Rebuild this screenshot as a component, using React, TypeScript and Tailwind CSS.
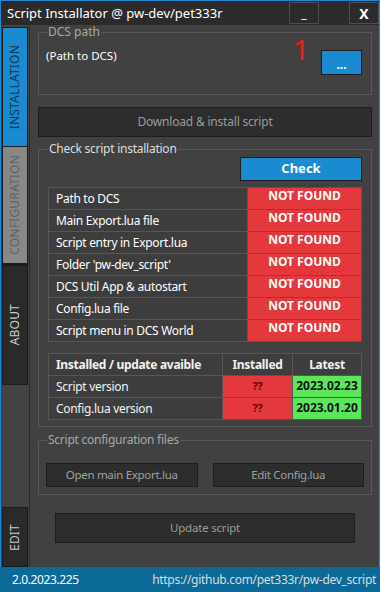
import React from "react";

const font = "font-['Noto_Sans',sans-serif]";

function Tab({ label, cls, h }: { label: string; cls: string; h: string }) {
  return (
    <div className={`w-[26px] ${h} border border-[#1c1c1c] flex items-center justify-center ${cls}`}>
      <span className="[writing-mode:vertical-rl] rotate-180 text-[12px] leading-[14px] tracking-[0.2px]">{label}</span>
    </div>
  );
}

const checks = [
  "Path to DCS",
  "Main Export.lua file",
  "Script entry in Export.lua",
  "Folder 'pw-dev_script'",
  "DCS Util App & autostart",
  "Config.lua file",
  "Script menu in DCS World",
];

export default function App() {
  return (
    <div className={`w-[380px] h-[592px] flex flex-col bg-[#414141] text-[#f2f2f2] ${font}`}>
      {/* title bar */}
      <div className="h-[25px] flex border-t border-x border-[#1b8ad3] bg-[#2b2b2b]">
        <div className="pl-[6px] pt-[3px] text-[13px] leading-[18px] text-white">Script Installator @ pw-dev/pet333r</div>
        <div className="ml-auto flex gap-[30px] pt-[1px]">
          <div className="w-[30px] h-[22px] border border-[#4d4d4d] flex items-end justify-center pb-[3px] text-[12px] leading-[12px] text-white">_</div>
          <div className="w-[30px] h-[22px] border border-[#4d4d4d] flex items-center justify-center text-[14px] font-bold text-white">X</div>
        </div>
      </div>

      {/* main */}
      <div className="flex-1 flex border-x border-[#1b8ad3] min-h-0">
        <div className="w-[29px] bg-[#434343] border-r border-[#2a2a2a] flex flex-col pl-[1px] pt-[2px]">
          <Tab label="INSTALLATION" h="h-[120px]" cls="bg-[#1b8bd1] text-[#173650]" />
          <Tab label="CONFIGURATION" h="h-[120px] -mt-px" cls="bg-[#888888] text-[#626262] border-b-[3px]" />
          <Tab label="ABOUT" h="h-[120px] -mt-px" cls="bg-[#2a2a2a] text-[#c8c8c8]" />
          <Tab label="EDIT" h="h-[60px] mt-auto" cls="bg-[#2a2a2a] text-[#c8c8c8]" />
        </div>

        <div className="flex-1 flex flex-col pl-[8px] pr-[7px]">
          {/* DCS path */}
          <fieldset className="h-[70px] border border-[#585858] pl-[7px] pr-[9px]">
            <legend className="ml-[1px] px-[1px] text-[12px] leading-[14px] text-[#a8a8a8]">DCS path</legend>
            <div className="flex items-start">
              <div className="mt-[10px] text-[11.5px] leading-[14px] text-white flex-1">(Path to DCS)</div>
              <div className="-mt-[4px] mr-[12px] text-[28px] leading-[28px] text-[#ee1c1c]">1</div>
              <div className="mt-[11px] w-[41px] h-[25px] bg-[#1b8bd1] border border-[#1e1e1e] flex items-center justify-center pt-[4px] text-[12px] font-bold leading-[12px] text-white">...</div>
            </div>
          </fieldset>

          <div className="mt-[12px] h-[30px] bg-[#2d2d2d] border border-[#1e1e1e] flex items-center justify-center text-[12px] tracking-[-0.2px] text-[#9c9c9c]">
            Download &amp; install script
          </div>

          {/* check installation */}
          <fieldset className="mt-[5px] border border-[#585858] px-[9px] pb-[6px]">
            <legend className="px-[1px] text-[12px] tracking-[-0.25px] leading-[14px] text-[#dcdcdc]">Check script installation</legend>
            <div className="flex justify-end mt-[1px]">
              <div className="w-[122px] h-[24px] bg-[#1b8bd1] border border-[#1e1e1e] flex items-center justify-center text-[13px] font-bold text-white">Check</div>
            </div>
            <div className="mt-[6px] grid grid-cols-[199px_1fr] border-t border-l border-[#565656]">
              {checks.map((c) => (
                <React.Fragment key={c}>
                  <div className="h-[22px] border-r border-b border-[#565656] bg-[#3d3d3d] pl-[7px] text-[12px] tracking-[-0.3px] leading-[21px] text-white">{c}</div>
                  <div className="h-[22px] border-r border-b border-[#565656] bg-[#e3393d] text-center text-[12px] font-bold leading-[16px] text-white">NOT FOUND</div>
                </React.Fragment>
              ))}
            </div>
            <div className="mt-[11px] grid grid-cols-[174px_70px_1fr] border-t border-l border-[#565656] text-[12px] tracking-[-0.3px]">
              <div className="h-[22px] border-r border-b border-[#565656] bg-[#3d3d3d] pl-[7px] leading-[21px] font-bold">Installed / update avaible</div>
              <div className="h-[22px] border-r border-b border-[#565656] bg-[#3d3d3d] text-center leading-[21px] font-bold">Installed</div>
              <div className="h-[22px] border-r border-b border-[#565656] bg-[#3d3d3d] text-center leading-[21px] font-bold">Latest</div>

              <div className="h-[22px] border-r border-b border-[#565656] bg-[#3d3d3d] pl-[7px] leading-[21px]">Script version</div>
              <div className="h-[22px] border-r border-b border-[#565656] bg-[#e3393d] text-center leading-[19px] font-bold text-[11px] text-[#6e0000]">??</div>
              <div className="h-[22px] border-r border-b border-[#565656] bg-[#5ce65c] text-center leading-[19px] font-bold text-[12px] tracking-[0px] text-[#101010]">2023.02.23</div>

              <div className="h-[22px] border-r border-b border-[#565656] bg-[#3d3d3d] pl-[7px] leading-[21px]">Config.lua version</div>
              <div className="h-[22px] border-r border-b border-[#565656] bg-[#e3393d] text-center leading-[19px] font-bold text-[11px] text-[#6e0000]">??</div>
              <div className="h-[22px] border-r border-b border-[#565656] bg-[#5ce65c] text-center leading-[19px] font-bold text-[12px] tracking-[0px] text-[#101010]">2023.01.20</div>
            </div>
          </fieldset>

          {/* config files */}
          <fieldset className="mt-[6px] border border-[#585858] px-[7px] pb-[7px]">
            <legend className="ml-[1px] px-[1px] text-[12px] tracking-[-0.25px] leading-[14px] text-[#a8a8a8]">Script configuration files</legend>
            <div className="mt-[16px] grid grid-cols-2 gap-[15px]">
              <div className="h-[24px] bg-[#2d2d2d] border border-[#1e1e1e] flex items-center justify-center text-[11.5px] tracking-[-0.3px] text-[#a0a0a0]">Open main Export.lua</div>
              <div className="h-[24px] bg-[#2d2d2d] border border-[#1e1e1e] flex items-center justify-center text-[11.5px] tracking-[-0.3px] text-[#a0a0a0]">Edit Config.lua</div>
            </div>
          </fieldset>

          <div className="mt-[18px] mx-auto w-[300px] h-[30px] bg-[#2d2d2d] border border-[#1e1e1e] flex items-center justify-center text-[11.5px] tracking-[-0.2px] text-[#9c9c9c]">
            Update script
          </div>
        </div>
      </div>

      {/* footer */}
      <div className="h-[25px] bg-[#0b6a98] flex items-center pl-[12px] pr-[4px] text-[12px] tracking-[-0.3px]">
        <span className="text-white tracking-[-0.4px]">2.0.2023.225</span>
        <span className="ml-auto text-[#dcdcdc]">https://github.com/pet333r/pw-dev_script</span>
      </div>
    </div>
  );
}
